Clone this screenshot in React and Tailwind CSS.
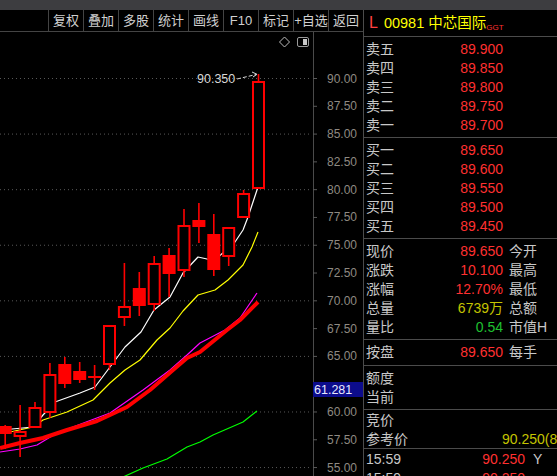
const FONT = "font-['Liberation_Sans','Noto_Sans_CJK_SC',sans-serif]"

const TOOLS = ['复权', '叠加', '多股', '统计', '画线', 'F10', '标记', '+自选', '返回']

// price -> y (page coords)
const py = (p) => 78 + ((90 - p) / 2.5) * 27.79

// 62.50 sits under the last-price box, so it is left out
const LABELS = [90, 87.5, 85, 82.5, 80, 77.5, 75, 72.5, 70, 67.5, 65, 60, 57.5, 55]
const TICKS = [90, 87.5, 85, 82.5, 80, 77.5, 75, 72.5, 70, 67.5, 65, 62.5, 60, 57.5, 55]
const GRID = [90, 85, 80, 75, 70, 65, 60, 55]

// [wickTop, bodyTop, bodyBottom, wickBottom, type]
const CANDLES = [
  [425, 427, 433, 449, 'fill'],
  [405, 432, 436, 457, 'hollow'],
  [402, 408, 427, 427, 'hollow'],
  [363, 375, 412, 418, 'hollow'],
  [357, 365, 383, 388, 'fill'],
  [362, 372, 379, 383, 'fill'],
  [365, 377, 377, 390, 'doji'],
  [325, 326, 364, 370, 'hollow'],
  [263, 307, 317, 326, 'hollow'],
  [272, 289, 305, 316, 'fill'],
  [256, 264, 304, 311, 'hollow'],
  [248, 256, 273, 297, 'fill'],
  [209, 226, 270, 277, 'hollow'],
  [203, 221, 226, 243, 'fill'],
  [214, 235, 269, 276, 'fill'],
  [228, 228, 256, 266, 'hollow'],
  [190, 194, 217, 217, 'hollow'],
  [74, 82, 188, 188, 'hollow'],
]

const MA = [
  {
    color: '#00ff00', w: 1.2,
    pts: '123,477 143,468 167,459 187,447 200,442 213,435 243,422 257,411',
  },
  {
    color: '#ff00ff', w: 1.2,
    pts: '0,452 20,449 37,445 57,433 110,413 143,390 170,370 187,355 200,343 225,330 240,318 257,293',
  },
  {
    color: '#ff0000', w: 4,
    pts: '0,448 20,443 43,438 67,430 97,421 110,415 127,407 150,390 173,370 187,358 200,352 227,330 240,320 258,302',
  },
  {
    color: '#ffff00', w: 1.2,
    pts: '0,433 10,432 33,427 43,420 67,412 93,400 110,383 125,370 140,360 157,340 170,328 183,311 198,295 215,290 228,280 243,265 252,247 258,232',
  },
  {
    color: '#ffffff', w: 1.2,
    pts: '0,430 12,429 33,427 43,415 55,402 80,393 95,387 110,367 125,347 141,332 154,310 170,297 183,273 198,257 207,259 215,260 235,242 243,230 248,217 257,190 258,188',
  },
]

function Chart() {
  return (
    <svg width="363" height="444" viewBox="0 32 363 444" className="block shrink-0">
      {GRID.map((p) => (
        <line key={p} x1="0" x2="312" y1={py(p) + 0.5} y2={py(p) + 0.5} stroke="#585858" strokeDasharray="1 3" />
      ))}
      <line x1="313.5" x2="313.5" y1="32" y2="476" stroke="#4a4a4a" />
      {TICKS.map((p) => (
        <line key={p} x1="313" x2="317" y1={py(p) + 0.5} y2={py(p) + 0.5} stroke="#5a5a5a" />
      ))}
      {LABELS.map((p) => (
        <text key={p} x="357" y={py(p) + 4.5} textAnchor="end" fontSize="12" fill="#8f8a82" fontFamily="Liberation Sans, sans-serif">
          {p.toFixed(2)}
        </text>
      ))}
      <rect x="313" y="382" width="50" height="15" fill="#0c0c8c" />
      <text x="314" y="394" fontSize="12.5" fill="#e8e8ff" fontFamily="Liberation Sans, sans-serif">61.281</text>

      {/* top-right icons */}
      <polygon points="284.5,37 289.5,42 284.5,47 279.5,42" fill="none" stroke="#bdbdbd" />
      <rect x="297.5" y="37.5" width="11" height="9" rx="1.5" fill="none" stroke="#9a9a9a" />
      <rect x="303" y="39" width="4" height="6" fill="#c8c8c8" />

      {MA.map((m, i) => (
        <polyline key={i} points={m.pts} fill="none" stroke={m.color} strokeWidth={m.w} strokeLinejoin="round" />
      ))}

      {CANDLES.map(([wt, bt, bb, wb, type], i) => {
        const c = 258.5 - (17 - i) * 14.9
        return (
          <g key={i}>
            <line x1={c} x2={c} y1={wt} y2={wb} stroke="#ff0000" strokeWidth="1.6" />
            {type === 'doji' ? (
              <line x1={c - 6.5} x2={c + 6.5} y1={bt} y2={bt} stroke="#ff0000" strokeWidth="2" />
            ) : (
              <rect
                x={c - 5.5}
                y={bt}
                width="11"
                height={Math.max(bb - bt, 1)}
                fill={type === 'fill' ? '#ff0000' : '#000000'}
                stroke="#ff0000"
                strokeWidth="2"
              />
            )}
          </g>
        )
      })}

      <text x="197" y="83" fontSize="12.5" fill="#d8d8d8" fontFamily="Liberation Sans, sans-serif">90.350</text>
      <line x1="237" y1="79" x2="256" y2="74.5" stroke="#d8d8d8" strokeDasharray="4 2" />
      <polyline points="252,72 257,74.3 253,77" fill="none" stroke="#d8d8d8" />
    </svg>
  )
}

function Row({ label, value, color = 'text-[#ff3030]', side }) {
  return (
    <div className="flex h-[19px] items-center whitespace-nowrap">
      <span className="w-[60px] shrink-0 text-[#c8c8c8]">{label}</span>
      <span className={`w-[77px] shrink-0 text-right ${color}`}>{value}</span>
      {side && <span className="ml-[6px] shrink-0 text-[#c8c8c8]">{side}</span>}
    </div>
  )
}

export default function App() {
  return (
    <div className={`flex h-[476px] w-[557px] flex-col overflow-hidden bg-black ${FONT}`}>
      <div className="h-[10px] shrink-0 bg-[#3d3d40]" />
      <div className="flex min-h-0 flex-1">
        <div className="flex w-[363px] shrink-0 flex-col">
          <div className="flex h-[22px] shrink-0 border-b border-[#444] pl-[48px]">
            {TOOLS.map((t) => (
              <div key={t} className="flex w-[35px] shrink-0 items-center justify-center whitespace-nowrap border-l border-[#444] text-[13px] text-[#d0d0d0]">
                {t}
              </div>
            ))}
          </div>
          <Chart />
        </div>

        <div className="flex min-h-0 flex-1 flex-col overflow-hidden border-l border-[#4b4b4b] text-[14px] leading-none">
          <div className="flex h-[27px] shrink-0 items-center border-b border-[#4b4b4b] pl-[5px] whitespace-nowrap">
            <span className="text-[16px] text-[#ff4040]">L</span>
            <span className="ml-[6px] text-[14.5px] text-[#ffff00]">00981 中芯国际</span>
            <span className="mt-[10px] text-[8px] text-[#ff3030]">GGT</span>
          </div>
          <div className="shrink-0 border-b border-[#4b4b4b] pt-[2px] pb-[3px] pl-[2px]">
            <Row label="卖五" value="89.900" />
            <Row label="卖四" value="89.850" />
            <Row label="卖三" value="89.800" />
            <Row label="卖二" value="89.750" />
            <Row label="卖一" value="89.700" />
          </div>
          <div className="shrink-0 border-b border-[#4b4b4b] pt-[2px] pb-[3px] pl-[2px]">
            <Row label="买一" value="89.650" />
            <Row label="买二" value="89.600" />
            <Row label="买三" value="89.550" />
            <Row label="买四" value="89.500" />
            <Row label="买五" value="89.450" />
          </div>
          <div className="shrink-0 border-b border-[#4b4b4b] pt-[2px] pb-[3px] pl-[2px]">
            <Row label="现价" value="89.650" side="今开" />
            <Row label="涨跌" value="10.100" side="最高" />
            <Row label="涨幅" value="12.70%" side="最低" />
            <Row label="总量" value="6739万" color="text-[#c4c400]" side="总额" />
            <Row label="量比" value="0.54" color="text-[#1fc030]" side="市值H" />
          </div>
          <div className="shrink-0 border-b border-[#4b4b4b] pt-[2px] pb-[4px] pl-[2px]">
            <Row label="按盘" value="89.650" side="每手" />
          </div>
          <div className="shrink-0 border-b border-[#4b4b4b] pt-[2px] pb-[3px] pl-[2px]">
            <Row label="额度" />
            <Row label="当前" />
          </div>
          <div className="shrink-0 border-b border-[#4b4b4b] pl-[2px]">
            <div className="flex h-[19px] items-center text-[#c8c8c8]">竞价</div>
            <div className="flex h-[19px] items-center whitespace-nowrap">
              <span className="w-[136px] shrink-0 text-[#c8c8c8]">参考价</span>
              <span className="shrink-0 text-[#c4c400]">90.250(89.650)</span>
            </div>
          </div>
          <div className="shrink-0 pl-[2px]">
            {['Y', ''].map((s, i) => (
              <div key={i} className="flex h-[19px] items-center whitespace-nowrap">
                <span className="w-[60px] shrink-0 text-[#c8c8c8]">15:59</span>
                <span className="w-[99px] shrink-0 text-right text-[#ff3030]">90.250</span>
                <span className="ml-[8px] shrink-0 text-[#c8c8c8]">{s}</span>
              </div>
            ))}
          </div>
        </div>
      </div>
    </div>
  )
}
